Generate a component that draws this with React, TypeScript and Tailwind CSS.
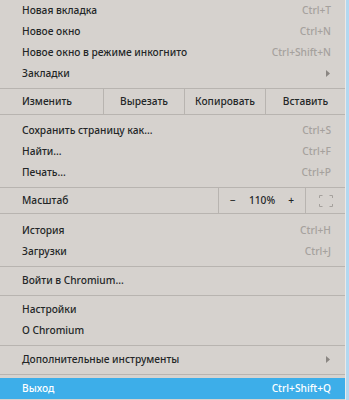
import React from "react";

type Item = { label: string; shortcut?: string; submenu?: boolean; active?: boolean };

function Row({ label, shortcut, submenu, active }: Item) {
  return (
    <div
      className={`flex h-[21px] items-center justify-between pl-[22px] pr-[14px] ${
        active ? "bg-[#3daee9] text-white" : "text-[#232627]"
      }`}
    >
      <span>{label}</span>
      {shortcut && (
        <span className={active ? "text-white" : "text-[#a5a19d]"}>{shortcut}</span>
      )}
      {submenu && (
        <svg width="4" height="7" viewBox="0 0 4 7" className="mr-[1px]">
          <path d="M0 0 L4 3.5 L0 7 Z" fill="#8a8682" />
        </svg>
      )}
    </div>
  );
}

function Sep() {
  return (
    <div className="flex h-[8px] items-center">
      <div className="h-px w-full bg-[#b8b4b0]" />
    </div>
  );
}

function Cell({ children, className = "" }: { children: React.ReactNode; className?: string }) {
  return (
    <div className={`flex items-center justify-center border-l border-[#b8b4b0] ${className}`}>
      {children}
    </div>
  );
}

export default function App() {
  return (
    <div
      className="flex h-[400px] w-[349px] bg-[#d6d2ce] text-[10.2px] font-medium"
      style={{ fontFamily: '"Noto Sans", "DejaVu Sans", sans-serif' }}
    >
      <div className="flex w-[345px] flex-col">
        <Row label="Новая вкладка" shortcut="Ctrl+T" />
        <Row label="Новое окно" shortcut="Ctrl+N" />
        <Row label="Новое окно в режиме инкогнито" shortcut="Ctrl+Shift+N" />
        <Row label="Закладки" submenu />

        {/* edit row */}
        <div className="mt-[4px] flex h-[27px] border-y border-[#b8b4b0] text-[#232627]">
          <div className="flex w-[103px] items-center pl-[22px]">Изменить</div>
          <Cell className="w-[81px]">Вырезать</Cell>
          <Cell className="w-[81px]">Копировать</Cell>
          <Cell className="flex-1">Вставить</Cell>
        </div>
        <div className="h-[5px]" />

        <Row label="Сохранить страницу как..." shortcut="Ctrl+S" />
        <Row label="Найти..." shortcut="Ctrl+F" />
        <Row label="Печать..." shortcut="Ctrl+P" />

        {/* zoom row */}
        <div className="mt-[4px] flex h-[27px] border-y border-[#b8b4b0] text-[#232627]">
          <div className="flex w-[218px] items-center pl-[22px]">Масштаб</div>
          <div className="flex w-[87px] items-center justify-between border-l border-[#b8b4b0] pl-[11px] pr-[11px]">
            <span>−</span>
            <span>110%</span>
            <span>+</span>
          </div>
          <Cell className="flex-1">
            <svg width="14" height="12" viewBox="0 0 14 12" fill="none" stroke="#a5a19d" strokeWidth="1">
              <path d="M0.5 3 V0.5 H3.5 M10.5 0.5 H13.5 V3 M13.5 9 V11.5 H10.5 M3.5 11.5 H0.5 V9" />
            </svg>
          </Cell>
        </div>
        <div className="h-[6px]" />

        <Row label="История" shortcut="Ctrl+H" />
        <Row label="Загрузки" shortcut="Ctrl+J" />
        <Sep />
        <Row label="Войти в Chromium..." />
        <Sep />
        <Row label="Настройки" />
        <Row label="О Chromium" />
        <Sep />
        <Row label="Дополнительные инструменты" submenu />
        <Sep />
        <Row label="Выход" shortcut="Ctrl+Shift+Q" active />
      </div>
      <div className="w-px bg-[#eceae8]" />
      <div className="w-[3px] bg-[#b3d8f0]" />
    </div>
  );
}
